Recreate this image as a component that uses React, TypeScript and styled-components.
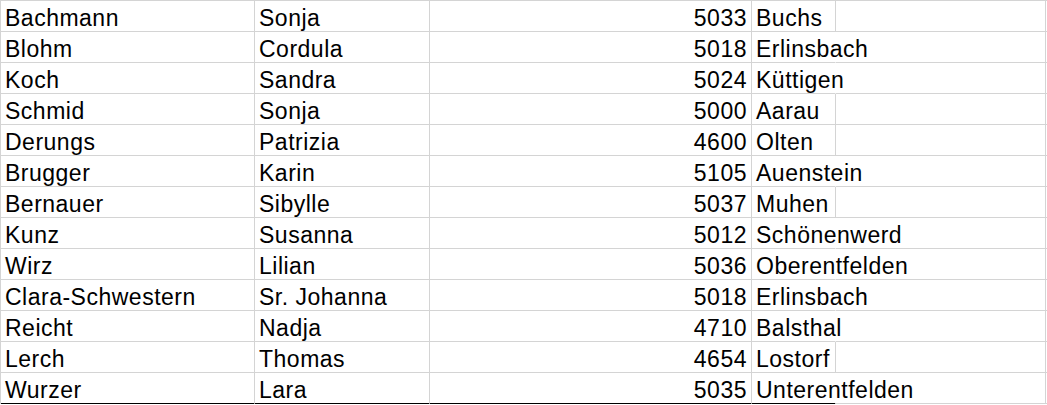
import React from "react";
import styled, { createGlobalStyle } from "styled-components";

const Global = createGlobalStyle`
  html, body { margin: 0; padding: 0; background: #ffffff; }
  body { font-family: "Liberation Sans", Arial, sans-serif; }
`;

const Sheet = styled.div`
  display: grid;
  grid-template-columns: 254px 175px 322px 84px 210px 1fr;
  grid-auto-rows: 31px;
  border-top: 1px solid #d4d4d4;
  border-left: 1px solid #d4d4d4;
  width: 1046px;
`;

const Cell = styled.div<{ $right?: boolean; $noRight?: boolean; $thick?: boolean }>`
  box-sizing: border-box;
  border-right: 1px solid ${(p) => (p.$noRight ? "transparent" : "#d4d4d4")};
  border-bottom: ${(p) => (p.$thick ? "2px solid #000000" : "1px solid #d4d4d4")};
  height: ${(p) => (p.$thick ? "32px" : "31px")};
  padding: 5px ${(p) => (p.$right ? "4px" : "4px")} 0 4px;
  font-size: 23px;
  letter-spacing: 0.5px;
  line-height: 24px;
  color: #000000;
  white-space: nowrap;
  overflow: visible;
  text-align: ${(p) => (p.$right ? "right" : "left")};
`;

type Row = { last: string; first: string; zip: string; city: string; overflow: boolean };

const rows: Row[] = [
  { last: "Bachmann", first: "Sonja", zip: "5033", city: "Buchs", overflow: false },
  { last: "Blohm", first: "Cordula", zip: "5018", city: "Erlinsbach", overflow: true },
  { last: "Koch", first: "Sandra", zip: "5024", city: "Küttigen", overflow: true },
  { last: "Schmid", first: "Sonja", zip: "5000", city: "Aarau", overflow: false },
  { last: "Derungs", first: "Patrizia", zip: "4600", city: "Olten", overflow: false },
  { last: "Brugger", first: "Karin", zip: "5105", city: "Auenstein", overflow: true },
  { last: "Bernauer", first: "Sibylle", zip: "5037", city: "Muhen", overflow: false },
  { last: "Kunz", first: "Susanna", zip: "5012", city: "Schönenwerd", overflow: true },
  { last: "Wirz", first: "Lilian", zip: "5036", city: "Oberentfelden", overflow: true },
  { last: "Clara-Schwestern", first: "Sr. Johanna", zip: "5018", city: "Erlinsbach", overflow: true },
  { last: "Reicht", first: "Nadja", zip: "4710", city: "Balsthal", overflow: true },
  { last: "Lerch", first: "Thomas", zip: "4654", city: "Lostorf", overflow: false },
  { last: "Wurzer", first: "Lara", zip: "5035", city: "Unterentfelden", overflow: true },
];

export default function App() {
  return (
    <>
      <Global />
      <Sheet>
        {rows.map((r, i) => {
          const last = i === rows.length - 1;
          return (
            <React.Fragment key={i}>
              <Cell $thick={last}>{r.last}</Cell>
              <Cell $thick={last}>{r.first}</Cell>
              <Cell $thick={last} $right>{r.zip}</Cell>
              <Cell $thick={last} $noRight={r.overflow}>{r.city}</Cell>
              <Cell />
              <Cell $noRight />
            </React.Fragment>
          );
        })}
      </Sheet>
    </>
  );
}
